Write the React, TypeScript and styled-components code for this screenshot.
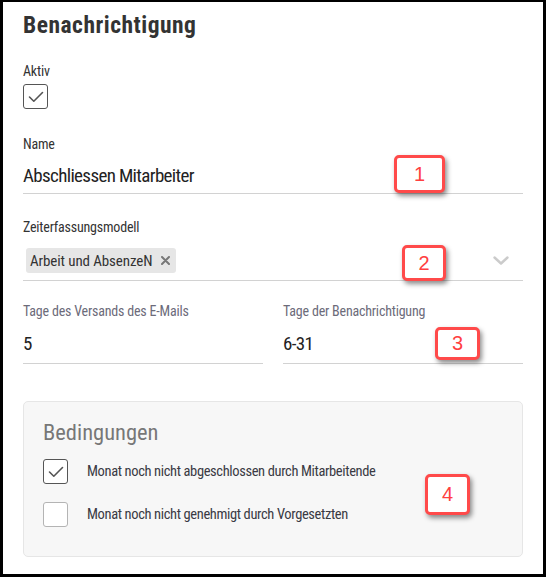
import React from "react";
import styled, { createGlobalStyle } from "styled-components";

const GlobalStyle = createGlobalStyle`
  html, body { margin: 0; padding: 0; background: #000; }
  body { font-family: "Roboto Condensed", Roboto, "Liberation Sans", sans-serif; }
  * { box-sizing: border-box; }
`;

const Frame = styled.div`
  position: relative;
  margin: 2px 3px 3px 3px;
  width: 540px;
  height: 572px;
  background: #fff;
  padding: 10px 20px 0 20px;
  overflow: hidden;
`;

const Title = styled.h1`
  margin: 0;
  font-size: 23.5px;
  line-height: 26px;
  letter-spacing: 0.5px;
  font-weight: 700;
  color: #333;
`;

const Section = styled.div<{ $mt: number }>`
  margin-top: ${(p) => p.$mt}px;
  display: flex;
  flex-direction: column;
`;

const Label = styled.div<{ $muted?: boolean }>`
  font-size: 14px;
  line-height: 16px;
  letter-spacing: -0.2px;
  color: ${(p) => (p.$muted ? "#6c6b7a" : "#333")};
  white-space: nowrap;
`;

const CheckBox = styled.div<{ $checked?: boolean }>`
  width: 25px;
  height: 25px;
  border: 1.5px solid ${(p) => (p.$checked ? "#555" : "#b4b4b4")};
  border-radius: 3px;
  background: #fff;
  display: flex;
  align-items: center;
  justify-content: center;
  flex-shrink: 0;
`;

const AktivBox = styled.div`
  margin-top: 5px;
`;

const Input = styled.div<{ $mt: number; $pb: number }>`
  margin-top: ${(p) => p.$mt}px;
  padding-bottom: ${(p) => p.$pb}px;
  border-bottom: 1px solid #d2d2d2;
  font-size: 19px;
  line-height: 24px;
  letter-spacing: -0.65px;
  color: #222;
  white-space: nowrap;
`;

const SelectRow = styled.div`
  margin-top: 13px;
  padding: 0 14px 7px 3px;
  border-bottom: 1px solid #d2d2d2;
  display: flex;
  align-items: center;
  justify-content: space-between;
`;

const Chip = styled.div`
  height: 25px;
  padding: 0 6px 0 4px;
  background: #e6e6e6;
  border-radius: 3px;
  display: flex;
  align-items: center;
  gap: 9px;
  font-size: 15px;
  letter-spacing: -0.1px;
  color: #333;
  white-space: nowrap;
`;

const TwoCols = styled.div`
  margin-top: 22px;
  display: grid;
  grid-template-columns: 1fr 1fr;
  column-gap: 20px;
`;

const Col = styled.div`
  display: flex;
  flex-direction: column;
`;

const ConditionsBox = styled.div`
  margin-top: 37px;
  background: #f7f7f7;
  border: 1px solid #e6e6e6;
  border-radius: 5px;
  padding: 17px 19px 29px 19px;
`;

const BoxTitle = styled.div`
  font-size: 22.5px;
  line-height: 26px;
  color: #777;
`;

const CondList = styled.div`
  margin-top: 14px;
  display: flex;
  flex-direction: column;
  gap: 18px;
`;

const CondRow = styled.div`
  display: flex;
  align-items: center;
  gap: 19px;
`;

const CondText = styled.span`
  font-size: 14.5px;
  letter-spacing: -0.37px;
  color: #3a3a44;
  white-space: nowrap;
`;

const Badge = styled.div<{ $x: number; $y: number; $w: number; $h: number }>`
  position: absolute;
  left: ${(p) => p.$x}px;
  top: ${(p) => p.$y}px;
  width: ${(p) => p.$w}px;
  height: ${(p) => p.$h}px;
  background: #fff;
  border: 3px solid #ff4a4a;
  border-radius: 5px;
  box-shadow: 2px 3px 5px rgba(0, 0, 0, 0.45);
  display: flex;
  align-items: center;
  justify-content: center;
  font-family: "Liberation Sans", Arial, sans-serif;
  font-size: 20px;
  color: #ff4040;
`;

const Check = () => (
  <svg width="16" height="14" viewBox="0 0 16 14">
    <path d="M1.5 7 L5.8 11.2 L14.5 2.5" fill="none" stroke="#555" strokeWidth="1.6" strokeLinecap="round" strokeLinejoin="round" />
  </svg>
);

const CloseX = () => (
  <svg width="9" height="9" viewBox="0 0 9 9">
    <path d="M1 1 L8 8 M8 1 L1 8" stroke="#777" strokeWidth="2" strokeLinecap="round" />
  </svg>
);

const Chevron = () => (
  <svg width="16" height="9" viewBox="0 0 16 9">
    <path d="M1.5 1.5 L8 7.5 L14.5 1.5" fill="none" stroke="#cbcbcb" strokeWidth="2.4" strokeLinecap="round" strokeLinejoin="round" />
  </svg>
);

export default function App() {
  return (
    <>
      <GlobalStyle />
      <Frame>
        <Title>Benachrichtigung</Title>

        <Section $mt={25}>
          <Label>Aktiv</Label>
          <AktivBox>
            <CheckBox $checked>
              <Check />
            </CheckBox>
          </AktivBox>
        </Section>

        <Section $mt={27}>
          <Label>Name</Label>
          <Input $mt={12} $pb={5}>Abschliessen Mitarbeiter</Input>
        </Section>

        <Section $mt={25}>
          <Label>Zeiterfassungsmodell</Label>
          <SelectRow>
            <Chip>
              Arbeit und AbsenzeN
              <CloseX />
            </Chip>
            <Chevron />
          </SelectRow>
        </Section>

        <TwoCols>
          <Col>
            <Label $muted>Tage des Versands des E-Mails</Label>
            <Input $mt={13} $pb={7}>5</Input>
          </Col>
          <Col>
            <Label $muted>Tage der Benachrichtigung</Label>
            <Input $mt={13} $pb={7}>6-31</Input>
          </Col>
        </TwoCols>

        <ConditionsBox>
          <BoxTitle>Bedingungen</BoxTitle>
          <CondList>
            <CondRow>
              <CheckBox $checked>
                <Check />
              </CheckBox>
              <CondText>Monat noch nicht abgeschlossen durch Mitarbeitende</CondText>
            </CondRow>
            <CondRow>
              <CheckBox />
              <CondText>Monat noch nicht genehmigt durch Vorgesetzten</CondText>
            </CondRow>
          </CondList>
        </ConditionsBox>

        <Badge $x={391} $y={153} $w={51} $h={38}>1</Badge>
        <Badge $x={399} $y={243} $w={44} $h={36}>2</Badge>
        <Badge $x={432} $y={325} $w={45} $h={33}>3</Badge>
        <Badge $x={422} $y={472} $w={45} $h={41}>4</Badge>
      </Frame>
    </>
  );
}
